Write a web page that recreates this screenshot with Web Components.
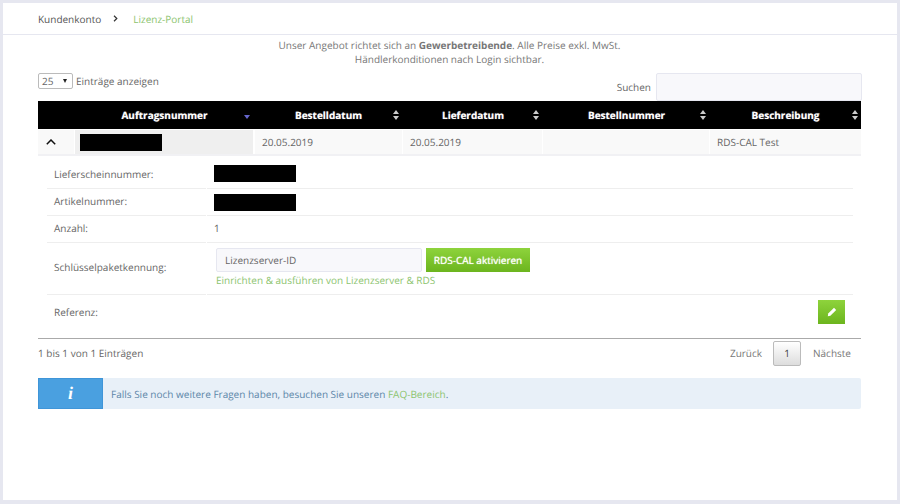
<!DOCTYPE html>
<html lang="de">
<head>
<meta charset="utf-8">
<title>Lizenz-Portal</title>
<style>
  html, body { margin: 0; height: 100%; }
  body {
    background: #e6e7f0;
    padding: 3px;
    box-sizing: border-box;
    font: 10px/16px "Open Sans", sans-serif;
    text-rendering: geometricPrecision;
    color: #666;
    overflow: hidden;
  }
</style>
</head>
<body>
<portal-card>
  <bread-crumb slot="top" current="Lizenz-Portal">Kundenkonto</bread-crumb>
  <portal-notice><span>Unser Angebot richtet sich an <b>Gewerbetreibende</b>. Alle Preise exkl. MwSt.</span><span>Händlerkonditionen nach Login sichtbar.</span></portal-notice>
  <table-controls></table-controls>
  <order-table></order-table>
  <table-footer></table-footer>
  <info-box>Falls Sie noch weitere Fragen haben, besuchen Sie unseren <a>FAQ-Bereich</a>.</info-box>
</portal-card>

<script>
class PortalCard extends HTMLElement {
  constructor() {
    super();
    this.attachShadow({ mode: "open" }).innerHTML = `
      <style>
        :host { display: block; height: 497px; background: #fff; }
        .content { padding: 0 36px 0 35px; }
      </style>
      <slot name="top"></slot>
      <div class="content"><slot></slot></div>`;
  }
}

class BreadCrumb extends HTMLElement {
  constructor() {
    super();
    this.attachShadow({ mode: "open" }).innerHTML = `
      <style>
        :host {
          display: flex;
          align-items: center;
          height: 31px;
          padding-left: 35px;
          border-bottom: 1px solid #e6e7f0;
          color: #555;
        }
        svg { margin: 0 15px 0 12px; }
        .current { color: #8cc46f; }
      </style>
      <slot></slot>
      <svg width="5" height="7" viewBox="0 0 5 7"><path d="M1 .8 3.8 3.500 1 6.200" fill="none" stroke="#333" stroke-width="1.200"/></svg>
      <span class="current">${this.getAttribute("current")}</span>`;
  }
}

class PortalNotice extends HTMLElement {
  constructor() {
    super();
    this.attachShadow({ mode: "open" }).innerHTML = `
      <style>
        :host { display: block; padding-top: 3px; text-align: center; line-height: 14px; color: #777; }
        ::slotted(span) { display: block; }
      </style>
      <slot></slot>`;
  }
}

class TableControls extends HTMLElement {
  constructor() {
    super();
    this.attachShadow({ mode: "open" }).innerHTML = `
      <style>
        :host { display: flex; justify-content: space-between; height: 29px; margin-top: 6px; }
        .length { display: flex; align-items: center; gap: 3px; height: 16px; margin-top: 1px; }
        .select {
          box-sizing: border-box;
          display: flex;
          justify-content: space-between;
          align-items: center;
          width: 35px;
          height: 16px;
          padding: 0 5px 0 3px;
          border: 1px solid #bbb;
          border-radius: 2px;
        }
        .select i { border: 2.5px solid transparent; border-top: 4px solid #222; border-bottom: 0; margin-bottom: 1px; }
        .search { display: flex; align-items: flex-start; gap: 5px; margin-right: -1px; }
        .search span { margin-top: 7px; }
        .search div {
          box-sizing: border-box;
          width: 206px;
          height: 28px;
          margin-top: 1px;
          background: #f8f8fb;
          border: 1px solid #e6e7f0;
          border-radius: 2px;
        }
      </style>
      <div class="length"><div class="select">25<i></i></div>Einträge anzeigen</div>
      <div class="search"><span>Suchen</span><div></div></div>`;
  }
}

class OrderTable extends HTMLElement {
  constructor() {
    super();
    const heads = ["Auftragsnummer", "Bestelldatum", "Lieferdatum", "Bestellnummer", "Beschreibung"];
    const arrows = `<svg class="sort" width="6" height="10" viewBox="0 0 6 10"><path d="M3 0 6 4H0ZM3 10 0 6H6Z" fill="#ccc"/></svg>`;
    const down = `<svg class="sort" width="6" height="10" viewBox="0 0 6 10"><path d="M3 9 0 5H6Z" fill="#6666cc"/></svg>`;
    this.attachShadow({ mode: "open" }).innerHTML = `
      <style>
        :host { display: block; }
        .head, .row { display: grid; grid-template-columns: 37px 180px 148px 140px 167px 151px; }
        .head { height: 28px; background: #000; margin-bottom: 1px; color: #fff; font-weight: 700; }
        .head div { display: flex; align-items: center; justify-content: center; position: relative; text-shadow: 0 0 1px #999; }
        .head div:nth-child(2), .head div:nth-child(3) { padding-right: 1px; }
        .sort { position: absolute; right: 4px; top: 9px; }
        .head div:nth-child(2) .sort { right: 5px; }
        .head div:last-child .sort { right: 3px; }
        .row { height: 24px; border-bottom: 2px solid #f1f1f4; }
        .row > div { background: #f9f9f9; margin-right: 1px; display: flex; align-items: center; padding-left: 7px; color: #666; }
        .row > .chev { padding-left: 8px; }
        .row > .grey { background: #efefef; padding-left: 5px; margin-right: 2px; }
        .row > div:last-child { margin-right: 0; }
        .black { width: 82px; height: 17px; background: #000; }
      </style>
      <div class="head">
        <div></div>
        ${heads.map((h, i) => `<div>${h}${i == 0 ? down : arrows}</div>`).join("")}
      </div>
      <div class="row">
        <div class="chev"><svg width="10" height="6" viewBox="0 0 10 6"><path d="M.8 5.200 5 1l4.200 4.200" fill="none" stroke="#111" stroke-width="1.500"/></svg></div>
        <div class="grey"><div class="black"></div></div>
        <div>20.05.2019</div>
        <div>20.05.2019</div>
        <div></div>
        <div>RDS-CAL Test</div>
      </div>
      <order-details></order-details>`;
  }
}

class OrderDetails extends HTMLElement {
  constructor() {
    super();
    this.attachShadow({ mode: "open" }).innerHTML = `
      <style>
        :host {
          display: grid;
          grid-template-columns: 160px 646px;
          grid-template-rows: 33px 27px 27px 52px 43px;
          padding: 0 8px 0 9px;
          border-bottom: 1px solid #aaa;
        }
        .cell { display: flex; align-items: center; border-bottom: 1px solid #eee; padding-left: 7px; }
        .label { margin-right: 1px; }
        .val { padding-left: 7px; }
        .nb { border-bottom: 0; }
        .first { padding-top: 3px; }
        .up { padding-bottom: 2px; }
        .up3 { padding-bottom: 3px; }
        .black { width: 82px; height: 17px; background: #000; }
        .key { display: block; padding-top: 5px; align-self: stretch; }
        .key-row { display: flex; gap: 4px; padding-left: 2px; }
        .input {
          box-sizing: border-box;
          width: 206px;
          height: 24px;
          padding-left: 8px;
          display: flex;
          align-items: center;
          background: #f8f8fb;
          border: 1px solid #e6e7f0;
          border-radius: 2px;
        }
        .btn {
          background: linear-gradient(#8ed33c, #6cb51e);
          color: #fff;
          text-shadow: 0 0 1px #fff;
        }
        .activate { width: 104px; height: 24px; display: flex; align-items: center; justify-content: center; }
        .hint { color: #8cc46f; padding: 1px 0 0 2px; line-height: 14px; }
        .edit { width: 27px; height: 24px; display: flex; align-items: center; justify-content: center; margin: -9px 8px 0 auto; }
        .ref { padding-bottom: 9px; }
      </style>
      <div class="cell label first">Lieferscheinnummer:</div>
      <div class="cell val first"><div class="black"></div></div>
      <div class="cell label up">Artikelnummer:</div>
      <div class="cell val"><div class="black"></div></div>
      <div class="cell label up">Anzahl:</div>
      <div class="cell val up">1</div>
      <div class="cell label up3">Schlüsselpaketkennung:</div>
      <div class="cell val key">
        <div class="key-row">
          <div class="input">Lizenzserver-ID</div>
          <div class="btn activate">RDS-CAL aktivieren</div>
        </div>
        <div class="hint">Einrichten &amp; ausführen von Lizenzserver &amp; RDS</div>
      </div>
      <div class="cell label nb ref">Referenz:</div>
      <div class="cell val nb">
        <div class="btn edit"><svg width="10" height="10" viewBox="0 0 10 10"><path d="M7 .8 9.200 3 3.400 8.800.8 9.200 1.200 6.600Z" fill="#fff"/></svg></div>
      </div>`;
  }
}

class TableFooter extends HTMLElement {
  constructor() {
    super();
    this.attachShadow({ mode: "open" }).innerHTML = `
      <style>
        :host { display: flex; justify-content: space-between; align-items: center; height: 28px; color: #666; }
        .pager { display: flex; align-items: center; margin-right: 10px; color: #777; }
        .page {
          box-sizing: border-box;
          width: 28px;
          height: 25px;
          margin: 0 12px 0 11px;
          display: flex;
          align-items: center;
          justify-content: center;
          border: 1px solid #bbb;
          border-radius: 2px;
          background: linear-gradient(#fff, #ddd);
          color: #444;
        }
      </style>
      <div>1 bis 1 von 1 Einträgen</div>
      <div class="pager">Zurück<div class="page">1</div>Nächste</div>`;
  }
}

class InfoBox extends HTMLElement {
  constructor() {
    super();
    this.attachShadow({ mode: "open" }).innerHTML = `
      <style>
        :host {
          display: flex;
          align-items: center;
          height: 31px;
          margin-top: 11px;
          background: #e8f0f8;
          color: #5c86a8;
          border-radius: 2px;
        }
        .icon {
          box-sizing: border-box;
          width: 65px;
          height: 31px;
          margin-right: 8px;
          display: flex;
          align-items: center;
          justify-content: center;
          background: #4aa0e0;
          border: 1px solid #3f95d8;
          color: #fff;
          font: italic 700 18px "Liberation Serif", serif;
        }
        ::slotted(a) { color: #8cc46f; }
      </style>
      <div class="icon">i</div>
      <div><slot></slot></div>`;
  }
}

customElements.define("portal-card", PortalCard);
customElements.define("bread-crumb", BreadCrumb);
customElements.define("portal-notice", PortalNotice);
customElements.define("table-controls", TableControls);
customElements.define("order-details", OrderDetails);
customElements.define("order-table", OrderTable);
customElements.define("table-footer", TableFooter);
customElements.define("info-box", InfoBox);
</script>
</body>
</html>
